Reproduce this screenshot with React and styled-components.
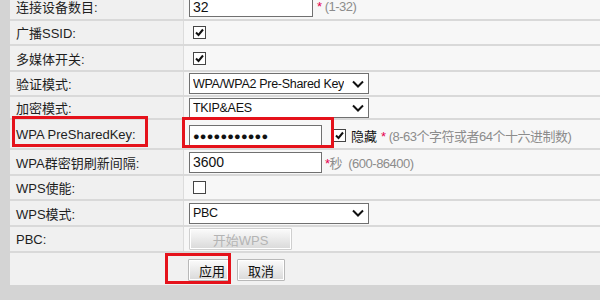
import React from "react";
import styled, { createGlobalStyle } from "styled-components";

const font = `"Liberation Sans", "Noto Sans CJK SC", sans-serif`;

/**
 * Wireless security settings form (router admin page)
 */
export default function App() {
  return (
    <Page>
      <GlobalStyle />
      <Form>
        <Row $h={25}>
          <Label>连接设备数目:</Label>
          <Value>
            <TextBox $w={124}>32</TextBox>
            <Hint><Star>*</Star> (1-32)</Hint>
          </Value>
        </Row>
        <Row $h={23}>
          <Label>广播SSID:</Label>
          <Value><CheckBox checked /></Value>
        </Row>
        <Row $h={24}>
          <Label>多媒体开关:</Label>
          <Value><CheckBox checked /></Value>
        </Row>
        <Row $h={23}>
          <Label>验证模式:</Label>
          <Value>
            <Select text="WPA/WPA2 Pre-Shared Key" />
          </Value>
        </Row>
        <Row $h={21}>
          <Label>加密模式:</Label>
          <Value>
            <Select text="TKIP&AES" height={20} />
          </Value>
        </Row>
        <Row $h={28}>
          <Label>
            <Highlight $l={2} $t={-4} $w={136} $h={31} />
            WPA PreSharedKey:
          </Label>
          <Value $pt={3}>
            <Anchor>
              <TextBox $w={133} $dots>●●●●●●●●●●●</TextBox>
              <Highlight $l={-7} $t={-8} $w={152} $h={31} />
            </Anchor>
            <CheckBox checked gap={11} />
            <Plain>隐藏</Plain>
            <Hint><Star>*</Star> (8-63个字符或者64个十六进制数)</Hint>
          </Value>
        </Row>
        <Row $h={24}>
          <Label>WPA群密钥刷新间隔:</Label>
          <Value>
            <TextBox $w={133}>3600</TextBox>
            <Hint $tight><Star>*</Star>秒&nbsp; (600-86400)</Hint>
          </Value>
        </Row>
        <Row $h={23}>
          <Label>WPS使能:</Label>
          <Value><CheckBox /></Value>
        </Row>
        <Row $h={24}>
          <Label>WPS模式:</Label>
          <Value>
            <Select text="PBC" />
          </Value>
        </Row>
        <Row $h={24}>
          <Label>PBC:</Label>
          <Value>
            <GrayButton $w={103} disabled>开始WPS</GrayButton>
          </Value>
        </Row>
        <ButtonRow>
          <Anchor>
            <GrayButton $w={41} $pl={7}>应用</GrayButton>
            <Highlight $l={-23} $t={-6} $w={66} $h={31} />
          </Anchor>
          <GrayButton $w={48}>取消</GrayButton>
        </ButtonRow>
      </Form>
    </Page>
  );
}

function CheckBox({ checked, gap = 4 }) {
  return (
    <Box $gap={gap}>
      {checked && (
        <svg width="11" height="11" viewBox="0 0 11 11">
          <path d="M2 5.5 L4.5 8 L9 2.5" fill="none" stroke="#111" strokeWidth="2" />
        </svg>
      )}
    </Box>
  );
}

function Select({ text, height = 21 }) {
  return (
    <SelectBox $h={height}>
      <SelectText>{text}</SelectText>
      <svg width="12" height="8" viewBox="0 0 12 8">
        <path d="M1 1.5 L6 6.5 L11 1.5" fill="none" stroke="#111" strokeWidth="2" />
      </svg>
    </SelectBox>
  );
}

// -------------- STYLES

const GlobalStyle = createGlobalStyle`
  html, body {
    margin: 0;
    background: #d4d4d4;
    font-family: ${font};
    overflow: hidden;
  }
`;

const Page = styled.div`
  height: 300px;
  padding-left: 10px;
`;

const Form = styled.div`
  width: 590px;
  margin-top: -6px;
  background: #f7f7f7;
`;

const Row = styled.div`
  display: grid;
  grid-template-columns: 174px 1fr;
  height: ${p => p.$h}px;
  border-bottom: 2px solid #d9d9d9;
`;

const Label = styled.div`
  position: relative;
  display: flex;
  align-items: center;
  padding-left: 6px;
  background: #f0f0f0;
  border-right: 1px solid #dcdcdc;
  font-size: 13px;
  color: #1e1e1e;
  white-space: nowrap;
`;

const Value = styled.div`
  display: flex;
  align-items: center;
  padding-left: 5px;
  padding-top: ${p => p.$pt || 0}px;
  background: #f7f7f7;
  font-size: 13px;
`;

const Anchor = styled.div`
  position: relative;
  display: flex;
`;

const TextBox = styled.div`
  box-sizing: border-box;
  width: ${p => p.$w}px;
  height: 21px;
  display: flex;
  align-items: center;
  padding-left: 3px;
  background: #fff;
  border: 1px solid #707070;
  font-size: ${p => (p.$dots ? "11px" : "14px")};
  letter-spacing: ${p => (p.$dots ? "0.2px" : "0")};
  color: #111;
`;

const Hint = styled.span`
  margin-left: ${p => (p.$tight ? 3 : 4)}px;
  font-size: 13px;
  letter-spacing: -0.5px;
  color: #8c8c8c;
  white-space: nowrap;
`;

const Star = styled.span`
  color: #e5004f;
`;

const Plain = styled.span`
  margin-left: 5px;
  color: #111;
`;

const Box = styled.span`
  box-sizing: border-box;
  width: 13px;
  height: 13px;
  margin-left: ${p => p.$gap}px;
  display: flex;
  align-items: center;
  justify-content: center;
  background: #fff;
  border: 1px solid #444;
`;

const SelectBox = styled.div`
  box-sizing: border-box;
  width: 180px;
  height: ${p => p.$h}px;
  display: flex;
  align-items: center;
  justify-content: space-between;
  padding: 0 4px 0 3px;
  background: #fff;
  border: 1px solid #707070;
  color: #111;
`;

const SelectText = styled.span`
  font-size: 12.5px;
  letter-spacing: -0.3px;
  white-space: nowrap;
  overflow: hidden;
`;

const GrayButton = styled.button`
  box-sizing: border-box;
  width: ${p => p.$w}px;
  height: 22px;
  padding: 0 0 0 ${p => p.$pl || 0}px;
  background: linear-gradient(#fbfbfb, #d9d9d9);
  border: 1px solid #b8b8b8;
  border-radius: 1px;
  box-shadow: inset 0 0 0 1px #fff;
  font-family: ${font};
  font-size: 13px;
  color: #111;

  &:disabled {
    color: #b4b4b4;
    border-color: #cfcfcf;
  }
`;

const ButtonRow = styled.div`
  display: flex;
  gap: 8px;
  height: 32px;
  box-sizing: border-box;
  padding: 6px 0 0 178px;
  background: #f1f1f1;
`;

const Highlight = styled.div`
  position: absolute;
  left: ${p => p.$l}px;
  top: ${p => p.$t}px;
  width: ${p => p.$w}px;
  height: ${p => p.$h}px;
  box-sizing: border-box;
  border: 3px solid #e5121b;
  pointer-events: none;
`;
